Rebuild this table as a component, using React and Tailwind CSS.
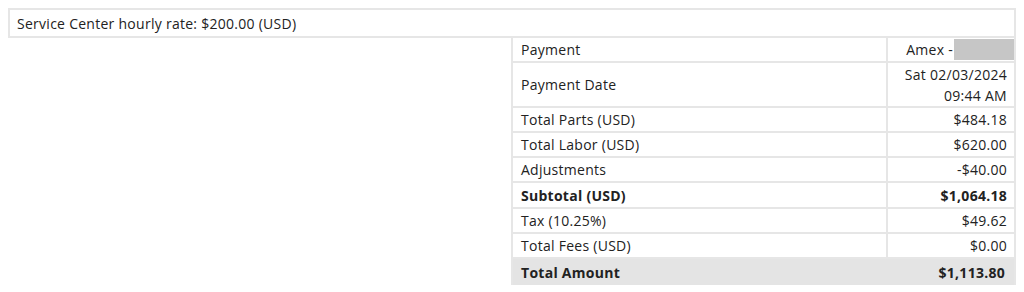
import React from "react";

const rows = [
  { label: "Total Parts (USD)", value: "$484.18" },
  { label: "Total Labor (USD)", value: "$620.00" },
  { label: "Adjustments", value: "-$40.00" },
  { label: "Subtotal (USD)", value: "$1,064.18", bold: true, h: "h-[26px]" },
  { label: "Tax (10.25%)", value: "$49.62" },
  { label: "Total Fees (USD)", value: "$0.00" },
];

export default function App() {
  return (
    <div
      className="p-2 text-[14px] tracking-[0.27px] text-[#222] bg-white"
      style={{ fontFamily: '"Open Sans", "Noto Sans", sans-serif' }}
    >
      <div className="border-2 border-[#e6e6e6] h-[30px] pl-[7px] flex items-center">
        Service Center hourly rate: $200.00 (USD)
      </div>
      <div className="flex justify-end">
        <div className="w-[505px] border-x-2 border-[#e6e6e6]">
          <div className="grid grid-cols-[375px_1fr] border-b-2 border-[#e6e6e6] h-[25px]">
            <div className="border-r-2 border-[#e6e6e6] pl-2 flex items-center">Payment</div>
            <div className="flex items-center justify-end">
              <span className="pr-[1px]">Amex -</span>
              <span className="w-[60px] h-[21px] bg-[#c6c6c6]" />
            </div>
          </div>
          <div className="grid grid-cols-[375px_1fr] border-b-2 border-[#e6e6e6] h-[45px]">
            <div className="border-r-2 border-[#e6e6e6] pl-2 flex items-center">Payment Date</div>
            <div className="flex flex-col justify-center items-end pr-[7px] leading-[21px] pt-[1px]">
              <span>Sat 02/03/2024</span>
              <span>09:44 AM</span>
            </div>
          </div>
          {rows.map((r) => (
            <div
              key={r.label}
              className={`grid grid-cols-[375px_1fr] border-b-2 border-[#e6e6e6] ${r.h ? r.h : "h-[25px]"} ${r.bold ? "font-bold" : ""}`}
            >
              <div className="border-r-2 border-[#e6e6e6] pl-2 flex items-center">{r.label}</div>
              <div className="flex items-center justify-end pr-[7px]">{r.value}</div>
            </div>
          ))}
          <div className="flex justify-between items-center h-[26px] bg-[#e4e4e4] font-bold pl-2 pr-[9px]">
            <span>Total Amount</span>
            <span>$1,113.80</span>
          </div>
        </div>
      </div>
    </div>
  );
}
